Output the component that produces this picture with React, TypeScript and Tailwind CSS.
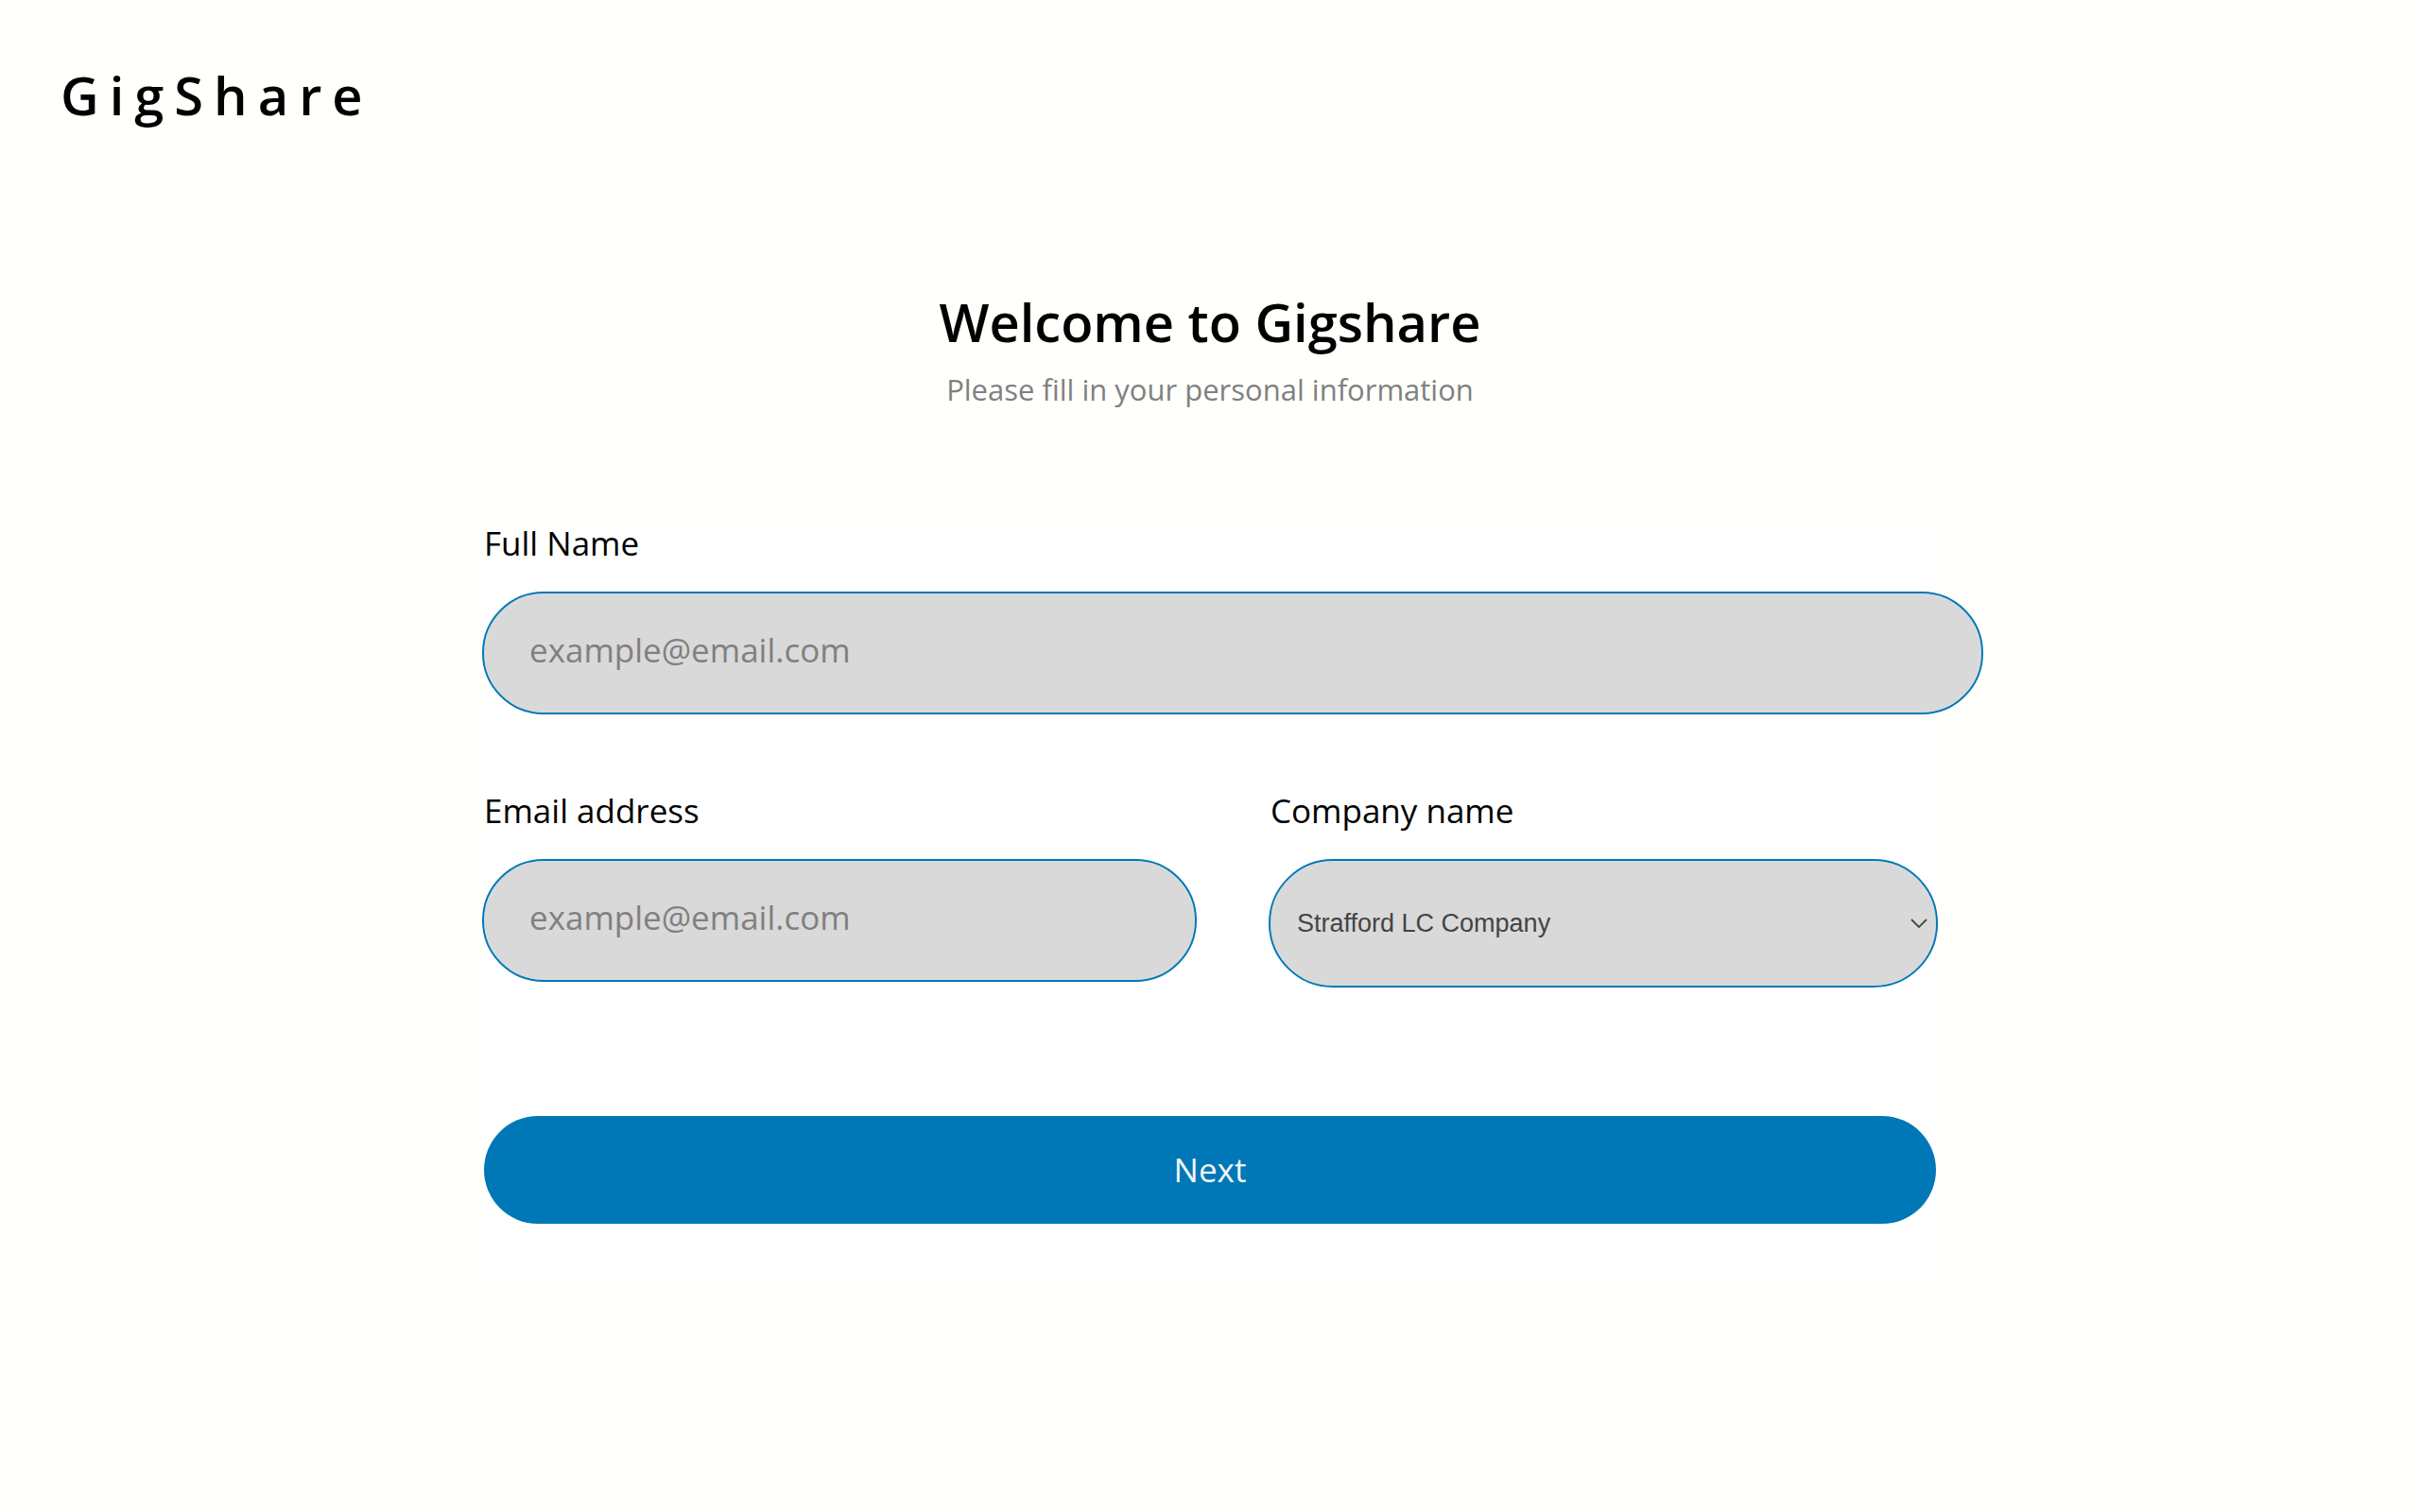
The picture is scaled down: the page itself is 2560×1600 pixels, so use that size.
import type { ReactNode } from 'react';

const control =
  'rounded-full bg-[#d9d9d9] outline-2 outline-[#0078b7]';

function Field({ id, label, children }: { id: string; label: string; children: ReactNode }) {
  return (
    <div className="flex flex-col gap-[30px]">
      <label htmlFor={id} className="text-[35px] leading-[46px] text-black">
        {label}
      </label>
      {children}
    </div>
  );
}

function TextField({ id, label, type }: { id: string; label: string; type: string }) {
  return (
    <Field id={id} label={label}>
      <input
        id={id}
        type={type}
        placeholder="example@email.com"
        className={`${control} h-[126px] w-[calc(100%+48px)] px-12 pb-2 text-[35px] placeholder:text-[#808080]`}
      />
    </Field>
  );
}

export default function App() {
  return (
    <div className="min-h-screen bg-[#fffffc] font-['Open_Sans',sans-serif] text-black">
      <header className="px-16 pt-15">
        <h2 className="text-[56px] leading-[80px] font-semibold tracking-[11px]">GigShare</h2>
      </header>
      <main className="mx-auto w-3/5 pt-40">
        <div className="text-center">
          <h1 className="text-[56px] leading-[80px] font-semibold">Welcome to Gigshare</h1>
          <p className="mt-2 text-[31px] leading-[48px] text-[#808080]">
            Please fill in your personal information
          </p>
        </div>
        <form className="mt-[116px] bg-white pb-16" onSubmit={(e) => e.preventDefault()}>
          <TextField id="full-name" label="Full Name" type="text" />
          <div className="mt-[81px] grid grid-cols-2 gap-32">
            <TextField id="email" label="Email address" type="email" />
            <Field id="company" label="Company name">
              <div className="relative">
                <select
                  id="company"
                  className={`${control} h-[132px] w-full appearance-none px-7 font-['Liberation_Sans',Arial,sans-serif] text-[27px] text-[#444444]`}
                >
                  <option>Strafford LC Company</option>
                </select>
                <svg
                  className="pointer-events-none absolute top-1/2 right-2 h-3 w-5 -translate-y-1/2"
                  viewBox="0 0 20 12"
                  fill="none"
                  stroke="#444444"
                  strokeWidth="1.8"
                  aria-hidden="true"
                >
                  <path d="M2 2l8 8 8-8" />
                </svg>
              </div>
            </Field>
          </div>
          <button
            type="submit"
            className="mt-[138px] block h-[114px] w-full rounded-full bg-[#0078b7] text-[35px] text-[#f5f5f5]"
          >
            Next
          </button>
        </form>
      </main>
    </div>
  );
}
